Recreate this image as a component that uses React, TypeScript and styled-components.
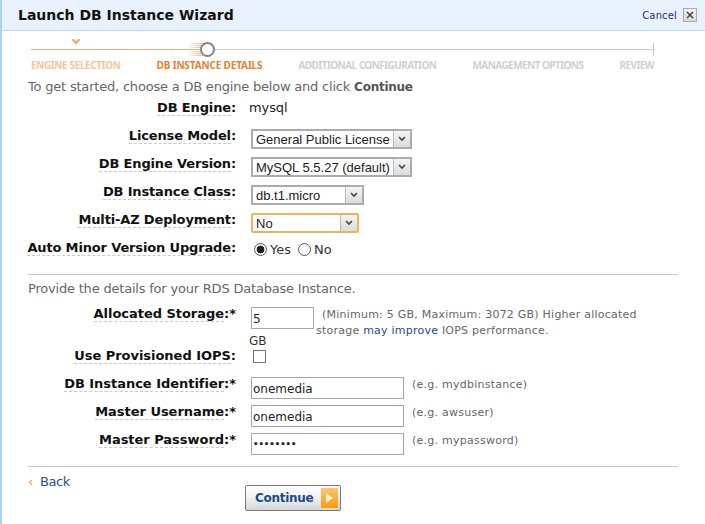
import React from "react";
import styled, { createGlobalStyle } from "styled-components";

const Global = createGlobalStyle`
  html, body { margin: 0; padding: 0; background: #fff; }
  body { font-family: "DejaVu Sans", Verdana, sans-serif; }
`;

const Page = styled.div`
  width: 705px;
  height: 524px;
  box-sizing: border-box;
  border-left: 2px solid #a9d2f3;
  overflow: hidden;
  background: #fff;
`;

const Header = styled.header`
  height: 30px;
  border-bottom: 1px solid #b8daf6;
  background: #e9f1fc;
  display: flex;
  align-items: center;
  padding: 0 8px 0 16px;
`;

const Title = styled.h1`
  margin: 0;
  flex: 1;
  font-size: 14px;
  font-weight: bold;
  color: #111;
`;

const Cancel = styled.a`
  font-size: 10px;
  color: #1c2f80;
  margin-right: 6px;
  letter-spacing: 0.15px;
`;

const CloseBox = styled.span`
  width: 12px;
  height: 12px;
  border: 1px solid #aaa;
  background: linear-gradient(#f2f2f2, #d8d8d8);
  display: flex;
  align-items: center;
  justify-content: center;
`;

const Stepper = styled.div`
  height: 46px;
  margin: 0 50px 0 29px;
  position: relative;
`;

const Track = styled.div`
  position: absolute;
  left: 0;
  right: 0;
  top: 18px;
  height: 1px;
  background: #cbcbcb;
`;

const TrackDone = styled.div`
  position: absolute;
  left: 0;
  width: 170px;
  top: 18px;
  height: 1px;
  background: #edb27c;
`;

const TrackEnd = styled.div`
  position: absolute;
  right: 1px;
  top: 12px;
  width: 1px;
  height: 13px;
  background: #c4c4c4;
`;

const Glow = styled.div`
  position: absolute;
  left: 156px;
  top: 11px;
  width: 16px;
  height: 15px;
  background: repeating-linear-gradient(#fff 0 1px, transparent 1px 2px),
    linear-gradient(90deg, rgba(247, 190, 130, 0), #f5ae6c);
`;

const Knob = styled.div`
  position: absolute;
  left: 169px;
  top: 11px;
  width: 11px;
  height: 11px;
  border: 2px solid #858585;
  border-radius: 50%;
  background: #fff;
`;

const DoneMark = styled.svg`
  position: absolute;
  left: 41px;
  top: 8px;
`;

const StepLabels = styled.div`
  position: absolute;
  left: 0;
  right: 1px;
  top: 27px;
  display: flex;
  justify-content: space-between;
`;

const StepLabel = styled.span<{ $state: "done" | "active" | "todo" }>`
  font-family: "Noto Sans", sans-serif;
  font-size: 10px;
  line-height: 14px;
  font-weight: 700;
  white-space: nowrap;
  letter-spacing: ${(p) =>
    p.$state === "active" ? "-0.15px" : p.$state === "done" ? "-0.38px" : "-0.55px"};
  color: ${(p) =>
    p.$state === "done" ? "#f6c498" : p.$state === "active" ? "#e8802c" : "#cfcfcf"};
`;

const Section = styled.div`
  margin: 0 27px 0 26px;
`;

const Lead = styled.p`
  margin: 0;
  font-size: 13px;
  line-height: 20px;
  letter-spacing: -0.2px;
  color: #666;
  strong { color: #555; font-size: 12px; letter-spacing: -0.25px; }
`;

const Row = styled.div<{ $tall?: boolean }>`
  display: grid;
  grid-template-columns: 208px 1fr;
  column-gap: 15px;
  height: ${(p) => (p.$tall ? 42 : 28)}px;
`;

const Label = styled.div`
  padding-top: 1px;
  font-size: 13px;
  font-weight: bold;
  line-height: 20px;
  letter-spacing: -0.15px;
  color: #111;
  white-space: nowrap;
  display: flex;
  justify-content: flex-end;
  align-items: flex-start;
`;

const Term = styled.span`
  height: 17px;
  border-bottom: 1px dashed #c8c8c8;
`;

const FieldGroup = styled.div`
  margin-top: 4px;
  ${Label} { letter-spacing: -0.03px; }
`;

const Plain = styled.div`
  padding-top: 1px;
  margin-left: -2px;
  font-size: 13px;
  line-height: 20px;
  letter-spacing: -0.1px;
  color: #222;
`;

const Control = styled.div`
  padding-top: 4px;
  position: relative;
`;

const SelectBox = styled.div<{ $w: number; $focus?: boolean }>`
  position: relative;
  width: ${(p) => p.$w}px;
  height: 20px;
  box-sizing: border-box;
  border: ${(p) => (p.$focus ? "2px solid #eeb35c" : "2px solid #acacac")};
  ${(p) => (p.$focus ? "border-radius: 2px;" : "")}
  background: #fff;
`;

const NativeSelect = styled.select`
  appearance: none;
  display: block;
  width: 100%;
  height: 100%;
  border: 0;
  outline: 0;
  padding: 0 0 0 3px;
  background: transparent;
  font-family: "Liberation Sans", Arial, sans-serif;
  font-size: 13px;
  color: #222;
`;

const Arrow = styled.span`
  position: absolute;
  top: 0;
  right: 0;
  bottom: 0;
  width: 16px;
  background: linear-gradient(#f4f4f4, #dcdcdc);
  border-left: 1px solid #bbb;
  display: flex;
  align-items: center;
  justify-content: center;
  pointer-events: none;
`;

const Radios = styled.div`
  display: flex;
  align-items: center;
  height: 16px;
  margin-left: 3px;
  font-size: 13px;
  color: #333;
`;

const RadioLabel = styled.label`
  display: flex;
  align-items: center;
  margin-right: 7px;
`;

const Radio = styled.input`
  appearance: none;
  width: 13px;
  height: 13px;
  margin: 0 3px 0 0;
  border: 1px solid #555;
  border-radius: 50%;
  background: #fff;
  &:checked {
    background: radial-gradient(circle, #222 0 3.6px, #fff 4.2px);
  }
`;

const Divider = styled.hr<{ $top: number; $bottom: number }>`
  border: 0;
  height: 1px;
  background: #c8c8c8;
  margin: ${(p) => p.$top}px 0 ${(p) => p.$bottom}px;
`;

const TextInput = styled.input<{ $w: number }>`
  display: block;
  width: ${(p) => p.$w}px;
  height: 22px;
  box-sizing: border-box;
  border: 1.5px solid #a6a6a6;
  outline: 0;
  padding: 2px 0 0 1px;
  font-family: "DejaVu Sans", Verdana, sans-serif;
  font-size: 12px;
  color: #222;
  background: #fff;
`;

const PasswordInput = styled(TextInput)`
  font-size: 8.5px;
  font-weight: bold;
  padding-top: 0;
`;

const StorageWrap = styled.div`
  display: flex;
  align-items: flex-start;
`;

const StorageCol = styled.div`
  width: 65px;
  flex: none;
`;

const Unit = styled.div`
  font-size: 12px;
  line-height: 14px;
  margin: 5px 0 0 -2px;
  color: #333;
`;

const Hint = styled.div`
  font-size: 11px;
  line-height: 16px;
  letter-spacing: 0.23px;
  color: #666;
  width: 325px;
  text-indent: 6px;
`;

const Link = styled.a`
  color: #1b4a8c;
`;

const InputRow = styled.div`
  display: flex;
  align-items: flex-start;
`;

const InlineHint = styled.span`
  font-size: 11px;
  line-height: 14px;
  letter-spacing: 0.25px;
  color: #666;
  margin: 1px 0 0 8px;
`;

const Checkbox = styled.input`
  appearance: none;
  display: block;
  width: 13px;
  height: 13px;
  margin: 1px 0 0 2px;
  border: 1px solid #777;
  background: #fff;
`;

const Back = styled.div`
  font-size: 13px;
  line-height: 20px;
  letter-spacing: -0.4px;
  color: #1f4f94;
  height: 18px;
  display: flex;
  align-items: center;
  gap: 7px;
`;

const Footer = styled.div`
  padding-left: 217px;
  margin-top: -6px;
`;

const ContinueButton = styled.button`
  width: 96px;
  height: 26px;
  box-sizing: border-box;
  padding: 0 2px 0 9px;
  border: 1px solid #777;
  border-radius: 2px;
  background: linear-gradient(#fff, #f4f4f4 40%, #d6d6d6);
  display: flex;
  align-items: center;
  justify-content: space-between;
  font-family: "DejaVu Sans", Verdana, sans-serif;
  font-size: 12px;
  font-weight: bold;
  letter-spacing: -0.3px;
  color: #1b4a8c;
`;

const PlayBox = styled.span`
  width: 17px;
  height: 20px;
  background: linear-gradient(#ffc56e, #ff9a0a);
  display: flex;
  align-items: center;
  justify-content: center;
`;

const Chevron = () => (
  <svg width="8" height="6" viewBox="0 0 8 6">
    <path d="M1 1l3 3 3-3" fill="none" stroke="#444" strokeWidth="1.6" />
  </svg>
);

const App = () => (
  <Page>
    <Global />
    <Header>
      <Title>Launch DB Instance Wizard</Title>
      <Cancel>Cancel</Cancel>
      <CloseBox>
        <svg width="8" height="8" viewBox="0 0 8 8">
          <path d="M1 1l6 6M7 1L1 7" stroke="#444" strokeWidth="1.5" />
        </svg>
      </CloseBox>
    </Header>

    <Stepper>
      <Track />
      <TrackDone />
      <TrackEnd />
      <Glow />
      <Knob />
      <DoneMark width="8" height="6" viewBox="0 0 8 6">
        <path d="M0 0l2 0 2 2 2-2 2 0 0 1.5-4 4.5-4-4.5z" fill="#f0b07a" />
      </DoneMark>
      <StepLabels>
        <StepLabel $state="done">ENGINE SELECTION</StepLabel>
        <StepLabel $state="active">DB INSTANCE DETAILS</StepLabel>
        <StepLabel $state="todo">ADDITIONAL CONFIGURATION</StepLabel>
        <StepLabel $state="todo">MANAGEMENT OPTIONS</StepLabel>
        <StepLabel $state="todo">REVIEW</StepLabel>
      </StepLabels>
    </Stepper>

    <Section>
      <Lead>
        To get started, choose a DB engine below and click <strong>Continue</strong>
      </Lead>
      <Row>
        <Label><Term>DB Engine</Term>:</Label>
        <Plain>mysql</Plain>
      </Row>
      <Row>
        <Label><Term>License Model</Term>:</Label>
        <Control>
          <SelectBox $w={161}>
            <NativeSelect defaultValue="General Public License">
              <option>General Public License</option>
            </NativeSelect>
            <Arrow><Chevron /></Arrow>
          </SelectBox>
        </Control>
      </Row>
      <Row>
        <Label><Term>DB Engine Version</Term>:</Label>
        <Control>
          <SelectBox $w={161}>
            <NativeSelect defaultValue="MySQL 5.5.27 (default)">
              <option>MySQL 5.5.27 (default)</option>
            </NativeSelect>
            <Arrow><Chevron /></Arrow>
          </SelectBox>
        </Control>
      </Row>
      <Row>
        <Label><Term>DB Instance Class</Term>:</Label>
        <Control>
          <SelectBox $w={113}>
            <NativeSelect defaultValue="db.t1.micro">
              <option>db.t1.micro</option>
            </NativeSelect>
            <Arrow><Chevron /></Arrow>
          </SelectBox>
        </Control>
      </Row>
      <Row>
        <Label><Term>Multi-AZ Deployment</Term>:</Label>
        <Control>
          <SelectBox $w={108} $focus>
            <NativeSelect defaultValue="No">
              <option>No</option>
            </NativeSelect>
            <Arrow><Chevron /></Arrow>
          </SelectBox>
        </Control>
      </Row>
      <Row>
        <Label><Term>Auto Minor Version Upgrade</Term>:</Label>
        <Control>
          <Radios>
            <RadioLabel><Radio type="radio" name="minor" defaultChecked />Yes</RadioLabel>
            <RadioLabel><Radio type="radio" name="minor" />No</RadioLabel>
          </Radios>
        </Control>
      </Row>

      <Divider $top={9} $bottom={4} />
      <Lead>Provide the details for your RDS Database Instance.</Lead>

      <FieldGroup>
        <Row $tall>
          <Label><Term>Allocated Storage</Term>:*</Label>
          <Control>
            <StorageWrap>
              <StorageCol>
                <TextInput $w={63} defaultValue="5" />
                <Unit>GB</Unit>
              </StorageCol>
              <Hint>
                (Minimum: 5 GB, Maximum: 3072 GB) Higher allocated storage <Link>may improve</Link> IOPS performance.
              </Hint>
            </StorageWrap>
          </Control>
        </Row>
        <Row>
          <Label><Term>Use Provisioned IOPS</Term>:</Label>
          <Control>
            <Checkbox type="checkbox" />
          </Control>
        </Row>
        <Row>
          <Label><Term>DB Instance Identifier</Term>:*</Label>
          <Control>
            <InputRow>
              <TextInput $w={153} defaultValue="onemedia" />
              <InlineHint>(e.g. mydbinstance)</InlineHint>
            </InputRow>
          </Control>
        </Row>
        <Row>
          <Label><Term>Master Username</Term>:*</Label>
          <Control>
            <InputRow>
              <TextInput $w={153} defaultValue="onemedia" />
              <InlineHint>(e.g. awsuser)</InlineHint>
            </InputRow>
          </Control>
        </Row>
        <Row>
          <Label><Term>Master Password</Term>:*</Label>
          <Control>
            <InputRow>
              <PasswordInput $w={153} type="password" defaultValue="onemedia" />
              <InlineHint>(e.g. mypassword)</InlineHint>
            </InputRow>
          </Control>
        </Row>
      </FieldGroup>

      <Divider $top={9} $bottom={6} />
      <Back>
        <svg width="5" height="7" viewBox="0 0 5 7">
          <path d="M4 1L1.5 3.5 4 6" fill="none" stroke="#ef9f6a" strokeWidth="1.2" />
        </svg>
        <span>Back</span>
      </Back>
      <Footer>
        <ContinueButton>
          Continue
          <PlayBox>
            <svg width="7" height="10" viewBox="0 0 7 10">
              <path d="M0 0l7 5-7 5z" fill="#fff3d6" />
            </svg>
          </PlayBox>
        </ContinueButton>
      </Footer>
    </Section>
  </Page>
);

export default App;
